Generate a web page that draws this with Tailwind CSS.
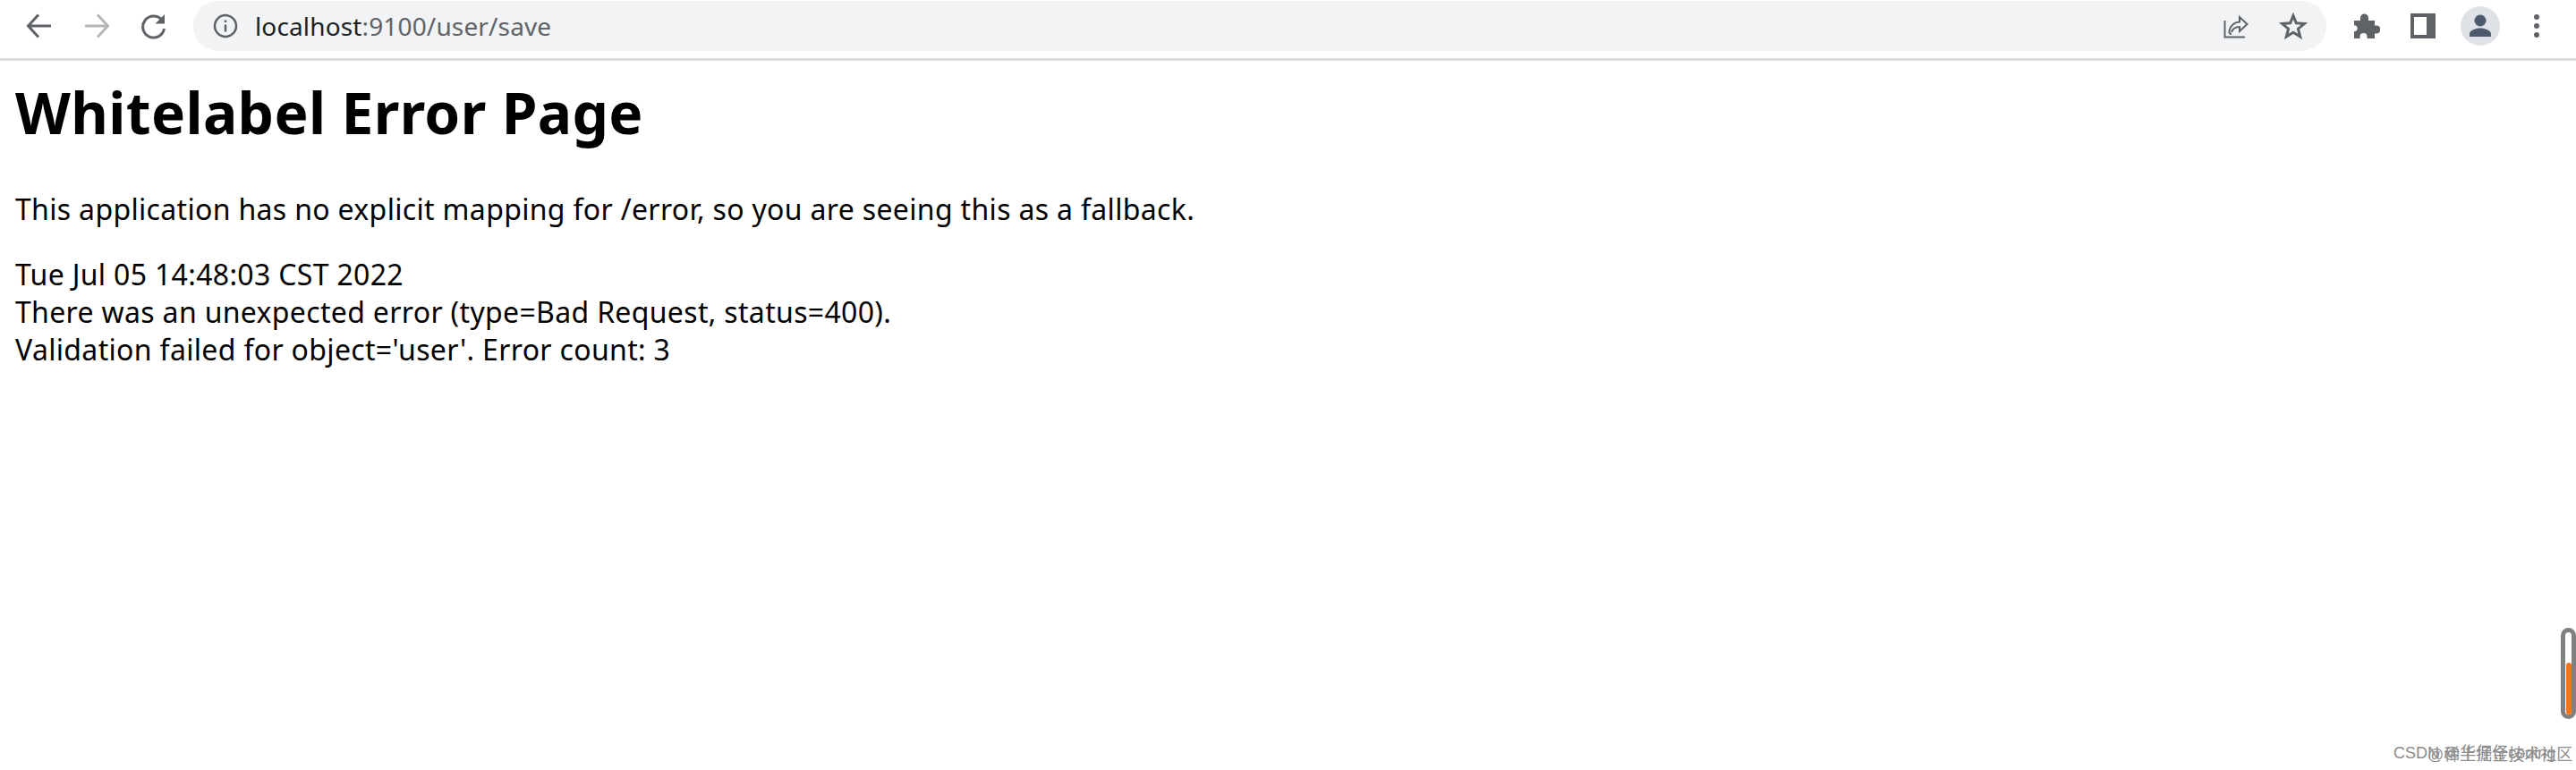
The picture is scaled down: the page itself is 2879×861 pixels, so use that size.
<!DOCTYPE html>
<html lang="en">

<head>
    <meta charset="UTF-8">
    <title>Whitelabel Error Page</title>
    <script src="https://cdn.jsdelivr.net/npm/@tailwindcss/browser@4"></script>
</head>

<body class="bg-white h-[861px] overflow-hidden relative font-['Noto_Sans',sans-serif] text-black">
    <!-- Browser toolbar -->
    <header class="h-[68px] border-b-[3px] border-[#dcdcdc] flex items-start bg-white">
        <div class="w-[216px] h-[58px] flex items-center shrink-0 text-[#5f6368]">
            <!-- back -->
            <svg class="ml-[28px]" width="32" height="32" viewBox="0 0 32 32" fill="none" stroke="#5f6368" stroke-width="3">
                <path d="M29 16H4M15 3.500L3.500 16 15 28.500" />
            </svg>
            <!-- forward -->
            <svg class="ml-[32px]" width="32" height="32" viewBox="0 0 32 32" fill="none" stroke="#b4b6b8" stroke-width="3">
                <path d="M3 16H28M17 3.500L28.500 16 17 28.500" />
            </svg>
            <!-- reload -->
            <svg class="ml-[32px]" width="32" height="32" viewBox="0 0 32 32" fill="none">
                <path d="M25 9.500A12 12 0 1 0 27.500 19" stroke="#5f6368" stroke-width="3" />
                <path d="M28 3V13.500H17.500Z" fill="#5f6368" />
            </svg>
        </div>
        <!-- omnibox -->
        <div class="w-[2384px] h-[56px] mt-px bg-[#f1f3f4] rounded-full flex items-center shrink-0">
            <svg class="ml-[22px]" width="28" height="28" viewBox="0 0 28 28" fill="none" stroke="#5f6368">
                <circle cx="14" cy="14" r="12" stroke-width="2.500" />
                <path d="M14 12.500V20.500M14 7.500V10" stroke-width="2.500" />
            </svg>
            <span class="ml-[19px] text-[28px] leading-none tracking-[0.14px] text-[#202124]">localhost<span class="text-[#5f6368]">:9100/user/save</span></span>
            <svg class="ml-auto" width="30" height="30" viewBox="0 0 30 30" fill="none" stroke="#5f6368" stroke-width="2">
                <path d="M3.500 9V27.500H26M11 24C9 24 8 23 8.500 20.500 10 14 15 10.500 20 10.500V5L28.500 13 20 21V16C15.500 16 12.500 18 11 22" />
            </svg>
            <svg class="ml-[34px] mr-[21px]" width="32" height="32" viewBox="0 0 32 32" fill="none" stroke="#5f6368" stroke-width="3" stroke-linejoin="miter">
                <path d="M16 4.500L19.300 12.800 28.500 13.400 21.400 19.200 23.700 28 16 23.300 8.300 28 10.600 19.200 3.500 13.400 12.700 12.800Z" />
            </svg>
        </div>
        <div class="flex-1 h-[58px] flex items-center">
            <!-- extensions -->
            <svg class="ml-[30px]" width="30" height="30" viewBox="0 0 30 30" fill="#5f6368">
                <path d="M1 9H8V6A4.500 4.500 0 0 1 17 6V9H24V14.500H26A4.500 4.500 0 0 1 26 23.500H24V29H15.500V27A4 4 0 0 0 7.500 27V29H1V21H3A4 4 0 0 0 3 14.500H1Z" />
            </svg>
            <!-- side panel -->
            <div class="ml-[34px] w-[28px] h-[28px] bg-[#5f6368] p-[4px] pr-[10px]">
                <div class="w-full h-full bg-white"></div>
            </div>
            <!-- profile -->
            <div class="ml-[28px] w-[44px] h-[44px] rounded-full bg-[#dee1e6] flex items-center justify-center">
                <svg width="26" height="26" viewBox="0 0 26 26" fill="#4d5a6e">
                    <circle cx="13" cy="7" r="6.500" />
                    <path d="M1 25V22C1 18 8 15.500 13 15.500S25 18 25 22V25Z" />
                </svg>
            </div>
            <!-- menu -->
            <div class="ml-[38px] flex flex-col gap-[4px]">
                <div class="w-[6px] h-[6px] rounded-full bg-[#5f6368]"></div>
                <div class="w-[6px] h-[6px] rounded-full bg-[#5f6368]"></div>
                <div class="w-[6px] h-[6px] rounded-full bg-[#5f6368]"></div>
            </div>
        </div>
    </header>

    <!-- Page content -->
    <main class="pl-[17px]">
        <h1 class="mt-[16px] text-[64px] leading-[84px] font-bold tracking-[0.37px]">Whitelabel Error Page</h1>
        <p class="mt-[45px] text-[32px] leading-[42px] tracking-[0.33px]">This application has no explicit mapping for /error, so you are seeing this as a fallback.</p>
        <div class="mt-[31px] text-[32px] leading-[42px] tracking-[0.33px]">
            <div>Tue Jul 05 14:48:03 CST 2022</div>
            <div>There was an unexpected error (type=Bad Request, status=400).</div>
            <div>Validation failed for object='user'. Error count: 3</div>
        </div>
    </main>

    <!-- Recording widget on the right edge -->
    <div class="absolute left-[2862px] top-[702px] w-[17px] h-[102px] border-[5px] border-[#808080] rounded-[9px] bg-white">
        <div class="absolute left-[1px] top-[34px] w-[6px] h-[58px] bg-[#f97316] rounded-[3px]"></div>
    </div>

    <!-- Watermarks, one printed over the other -->
    <div class="absolute left-[2675px] top-[830px] text-[18px] leading-[24px] text-[#8c8c8c] font-['Liberation_Sans','Noto_Sans_CJK_SC',sans-serif] whitespace-nowrap">CSDN @华仔仔coding</div>
    <div class="absolute left-[2713px] top-[832px] text-[18px] leading-[24px] text-[#8c8c8c] font-['Liberation_Sans','Noto_Sans_CJK_SC',sans-serif] whitespace-nowrap">@稀土掘金技术社区</div>
</body>

</html>
